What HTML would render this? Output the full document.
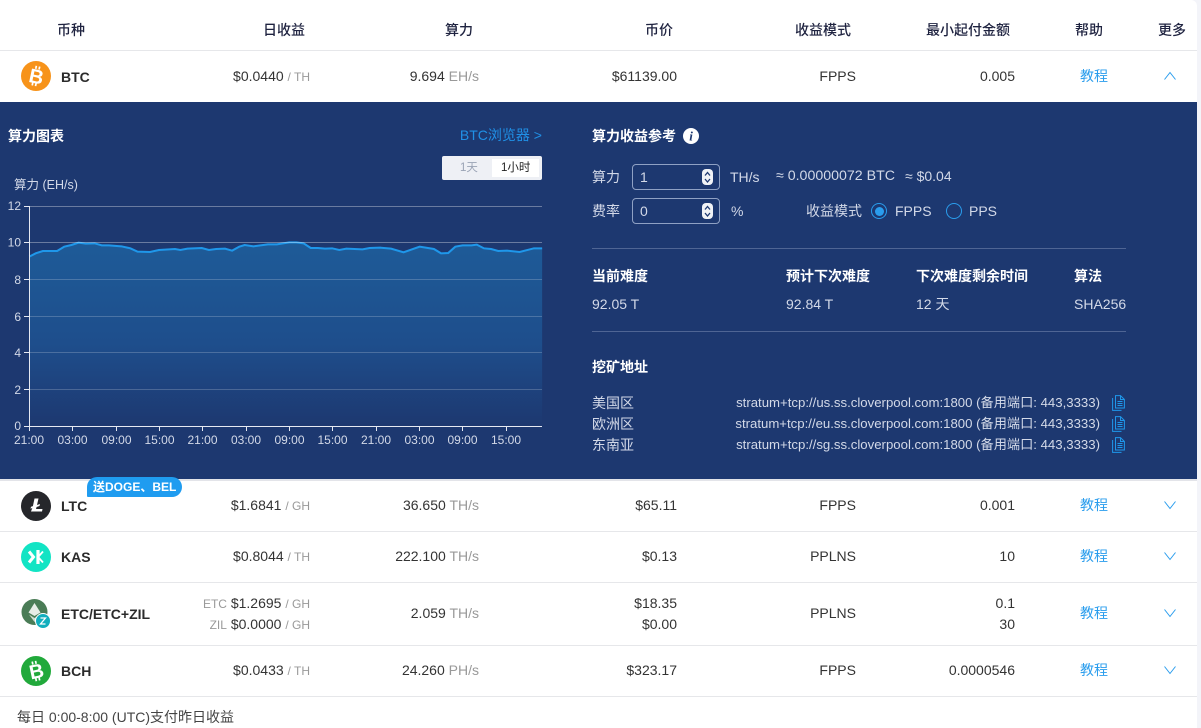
<!DOCTYPE html>
<html lang="zh">
<head>
<meta charset="utf-8">
<title>币种</title>
<style>
html,body{margin:0;padding:0;width:1201px;height:728px;overflow:hidden;background:#f3f4f9}
body{font-family:"Liberation Sans","Noto Sans CJK SC",sans-serif;font-size:14px;color:#333;position:relative}
#wrap{position:absolute;left:0;top:0;width:1197px;height:728px;background:#fff;border-top-right-radius:6px}
.t{position:absolute;white-space:nowrap;line-height:20px}
.h{color:#1f2340;font-weight:500;font-size:14px}
.b{font-weight:700;color:#2b2b2b}
.u{color:#999}
.l{color:#2a9ded}
.line{position:absolute;left:0;width:1197px;height:1px;background:#e6e7ea}
#panel{position:absolute;left:0;top:102px;width:1197px;height:377px;background:#1d3870}
.w{color:#fff;font-weight:700;font-size:14px}
.p{color:#d3d9e8}
.sep{position:absolute;left:592px;width:534px;height:1px;background:#4f6594}
.inp{position:absolute;left:632px;width:86px;height:24px;border:1px solid #8fa1c4;border-radius:4px}
.step{position:absolute;left:702px;width:11px;height:16px;background:#f0f2f6;border-radius:4px}
.radio{position:absolute;width:14px;height:14px;border:1.5px solid #2a9ded;border-radius:50%}
.addr{font-size:13.2px;right:97px}
</style>
</head>
<body>
<div id="wrap">

<span class="t h" style="left:57px;top:20px">币种</span>
<span class="t h" style="right:892px;top:20px">日收益</span>
<span class="t h" style="right:724px;top:20px">算力</span>
<span class="t h" style="right:524px;top:20px">币价</span>
<span class="t h" style="right:346px;top:20px">收益模式</span>
<span class="t h" style="right:187px;top:20px">最小起付金额</span>
<span class="t h" style="left:1075px;top:20px">帮助</span>
<span class="t h" style="left:1158px;top:20px">更多</span>
<div class="line" style="top:50px"></div>

<svg style="position:absolute;left:21px;top:61px" width="30" height="30" viewBox="0 0 30 30"><circle cx="15" cy="15" r="15" fill="#f7931a"/><g transform="rotate(12 15 15)" fill="#fff"><rect x="12.400" y="5" width="1.700" height="3"/><rect x="15.800" y="5" width="1.700" height="3"/><rect x="12.400" y="22" width="1.700" height="3"/><rect x="15.800" y="22" width="1.700" height="3"/><text x="15.500" y="22.300" text-anchor="middle" font-family="Liberation Sans" font-weight="700" font-size="20">B</text></g></svg>
<span class="t b" style="left:61px;top:67px">BTC</span>
<span class="t" style="right:887px;top:66px">$0.0440 <span class="u" style="font-size:12px">/ TH</span></span>
<span class="t" style="right:718px;top:66px">9.694 <span class="u">EH/s</span></span>
<span class="t" style="right:520px;top:66px">$61139.00</span>
<span class="t" style="right:341px;top:66px">FPPS</span>
<span class="t" style="right:182px;top:66px">0.005</span>
<span class="t l" style="left:1080px;top:66px">教程</span>
<svg style="position:absolute;left:1163px;top:70px" width="14" height="11" viewBox="0 0 14 11"><path d="M1.500 9.500L7 2.500L12.500 9.500" fill="none" stroke="#2a9ded" stroke-width="1"/></svg>

<div id="panel"></div>

<span class="t w" style="left:8px;top:126px">算力图表</span>
<span class="t l" style="right:655px;top:125px;color:#2090e6">BTC浏览器 &gt;</span>
<div style="position:absolute;left:442px;top:156px;width:100px;height:24px;background:#eef0f5;border-radius:2px"></div>
<div style="position:absolute;left:492px;top:159px;width:47px;height:18px;background:#fff"></div>
<span class="t" style="left:460px;top:158px;font-size:11.500px;color:#9aa3b5">1天</span>
<span class="t" style="left:501px;top:158px;font-size:11.500px;color:#222">1小时</span>
<span class="t p" style="left:14px;top:175px;font-size:12.500px">算力 (EH/s)</span>

<svg style="position:absolute;left:0;top:190px" width="560" height="260" viewBox="0 190 560 260">
<defs><linearGradient id="g" x1="0" y1="0" x2="0" y2="1"><stop offset="0" stop-color="#1e5b98"/><stop offset=".55" stop-color="#1e4e8c"/><stop offset="1" stop-color="#1d3870"/></linearGradient></defs>
<g transform="translate(0,120) scale(.35714,.33333)">
<polygon fill="url(#g)" points="82,410 100,400 120,393 160,393 180,380 200,375 220,368 240,371 265,370 285,376 305,376 340,379 365,385 385,395 420,396 445,390 490,387 505,390 525,386 565,384 585,390 605,387 630,386 650,392 670,380 685,375 710,379 750,373 775,373 810,367 830,367 850,370 870,384 890,384 910,386 930,385 950,390 970,386 1015,388 1035,384 1065,383 1095,386 1130,397 1175,380 1215,387 1235,400 1255,399 1275,380 1295,376 1320,376 1335,374 1355,385 1375,387 1395,393 1420,392 1455,396 1495,385 1518,385 1518,919 82,919"/>
<polyline fill="none" stroke="#1f97ea" stroke-width="6" points="82,410 100,400 120,393 160,393 180,380 200,375 220,368 240,371 265,370 285,376 305,376 340,379 365,385 385,395 420,396 445,390 490,387 505,390 525,386 565,384 585,390 605,387 630,386 650,392 670,380 685,375 710,379 750,373 775,373 810,367 830,367 850,370 870,384 890,384 910,386 930,385 950,390 970,386 1015,388 1035,384 1065,383 1095,386 1130,397 1175,380 1215,387 1235,400 1255,399 1275,380 1295,376 1320,376 1335,374 1355,385 1375,387 1395,393 1420,392 1455,396 1495,385 1518,385"/>
</g>
<g stroke="#fff" stroke-opacity=".34" stroke-width="1">
<path d="M29 206.500H542M29 242.500H542"/>
</g>
<g stroke="#fff" stroke-opacity=".2" stroke-width="1">
<path d="M29 279.500H542M29 316.500H542M29 352.500H542M29 389.500H542"/>
</g>
<g stroke="#e6e9f2" stroke-width="1" fill="none">
<path d="M29.500 206V426.500H542"/>
<path d="M24 206.500H29M24 242.500H29M24 279.500H29M24 316.500H29M24 352.500H29M24 389.500H29M24 426.500H29"/>
<path d="M29.500 427V431M72.500 427V431M116.500 427V431M159.500 427V431M202.500 427V431M246.500 427V431M289.500 427V431M332.500 427V431M376.500 427V431M419.500 427V431M462.500 427V431M506.500 427V431"/>
</g>
<g font-family="Liberation Sans" font-size="12" fill="#d3d9e8" text-anchor="end">
<text x="21" y="210">12</text><text x="21" y="246.500">10</text><text x="21" y="284">8</text><text x="21" y="321">6</text><text x="21" y="357">4</text><text x="21" y="394">2</text><text x="21" y="430">0</text>
</g>
<g font-family="Liberation Sans" font-size="12" fill="#d3d9e8" text-anchor="middle">
<text x="29" y="444">21:00</text><text x="72.500" y="444">03:00</text><text x="116.500" y="444">09:00</text><text x="159.500" y="444">15:00</text><text x="202.500" y="444">21:00</text><text x="246" y="444">03:00</text><text x="289.500" y="444">09:00</text><text x="332.500" y="444">15:00</text><text x="376" y="444">21:00</text><text x="419.500" y="444">03:00</text><text x="462.500" y="444">09:00</text><text x="506" y="444">15:00</text>
</g>
</svg>

<span class="t w" style="left:592px;top:126px">算力收益参考</span>
<svg style="position:absolute;left:683px;top:128px" width="16" height="16" viewBox="0 0 16 16"><circle cx="8" cy="8" r="8" fill="#fff"/><text x="8" y="12.500" text-anchor="middle" font-family="Liberation Serif" font-style="italic" font-weight="700" font-size="13" fill="#1d3870">i</text></svg>

<span class="t p" style="left:592px;top:167px">算力</span>
<div class="inp" style="top:164px"></div>
<span class="t p" style="left:640px;top:167px">1</span>
<div class="step" style="top:169px"></div>
<svg style="position:absolute;left:702px;top:169px" width="11" height="16" viewBox="0 0 11 16"><path d="M3 6.500L5.500 3.500L8 6.500M3 10L5.500 13L8 10" fill="none" stroke="#1d3870" stroke-width="1.300"/></svg>
<span class="t p" style="left:730px;top:167px">TH/s</span>
<span class="t p" style="left:776px;top:166px;font-size:14.200px">≈ 0.00000072 BTC</span>
<span class="t p" style="left:905px;top:166px">≈ $0.04</span>

<span class="t p" style="left:592px;top:201px">费率</span>
<div class="inp" style="top:198px"></div>
<span class="t p" style="left:640px;top:201px">0</span>
<div class="step" style="top:203px"></div>
<svg style="position:absolute;left:702px;top:203px" width="11" height="16" viewBox="0 0 11 16"><path d="M3 6.500L5.500 3.500L8 6.500M3 10L5.500 13L8 10" fill="none" stroke="#1d3870" stroke-width="1.300"/></svg>
<span class="t p" style="left:731px;top:201px">%</span>
<span class="t p" style="left:806px;top:201px">收益模式</span>
<div class="radio" style="left:871px;top:203px"></div>
<div style="position:absolute;left:875px;top:207px;width:9px;height:9px;border-radius:50%;background:#2a9ded"></div>
<span class="t p" style="left:895px;top:201px">FPPS</span>
<div class="radio" style="left:946px;top:203px"></div>
<span class="t p" style="left:969px;top:201px">PPS</span>

<div class="sep" style="top:248px"></div>
<span class="t w" style="left:592px;top:266px">当前难度</span>
<span class="t w" style="left:786px;top:266px">预计下次难度</span>
<span class="t w" style="left:916px;top:266px">下次难度剩余时间</span>
<span class="t w" style="left:1074px;top:266px">算法</span>
<span class="t p" style="left:592px;top:294px">92.05 T</span>
<span class="t p" style="left:786px;top:294px">92.84 T</span>
<span class="t p" style="left:916px;top:294px">12 天</span>
<span class="t p" style="left:1074px;top:294px">SHA256</span>
<div class="sep" style="top:331px"></div>

<span class="t w" style="left:592px;top:357px">挖矿地址</span>
<span class="t p" style="left:592px;top:393px">美国区</span>
<span class="t p addr" style="top:393px">stratum+tcp://us.ss.cloverpool.com:1800 (备用端口: 443,3333)</span>
<span class="t p" style="left:592px;top:414px">欧洲区</span>
<span class="t p addr" style="top:414px">stratum+tcp://eu.ss.cloverpool.com:1800 (备用端口: 443,3333)</span>
<span class="t p" style="left:592px;top:435px">东南亚</span>
<span class="t p addr" style="top:435px">stratum+tcp://sg.ss.cloverpool.com:1800 (备用端口: 443,3333)</span>
<svg style="position:absolute;left:1112px;top:395px" width="13" height="16" viewBox="0 0 13 16"><path d="M3.500 .6H8.500L12.400 4.500V13H3.500ZM8.500 .6V4.500H12.400M.6 3V15.400H9.500M5.500 6.500H10.500M5.500 8.500H10.500M5.500 10.500H10.500" fill="none" stroke="#1f97ea" stroke-width="1"/></svg>
<svg style="position:absolute;left:1112px;top:416px" width="13" height="16" viewBox="0 0 13 16"><path d="M3.500 .6H8.500L12.400 4.500V13H3.500ZM8.500 .6V4.500H12.400M.6 3V15.400H9.500M5.500 6.500H10.500M5.500 8.500H10.500M5.500 10.500H10.500" fill="none" stroke="#1f97ea" stroke-width="1"/></svg>
<svg style="position:absolute;left:1112px;top:437px" width="13" height="16" viewBox="0 0 13 16"><path d="M3.500 .6H8.500L12.400 4.500V13H3.500ZM8.500 .6V4.500H12.400M.6 3V15.400H9.500M5.500 6.500H10.500M5.500 8.500H10.500M5.500 10.500H10.500" fill="none" stroke="#1f97ea" stroke-width="1"/></svg>

<div class="line" style="top:479px;height:2px;background:#e3e4e9"></div>

<svg style="position:absolute;left:21px;top:491px" width="30" height="30" viewBox="0 0 30 30"><circle cx="15" cy="15" r="15" fill="#26272b"/><path d="M13.500 7.500H17.500L16 14L19 13L18.500 15L15.600 16L15 18H21.500L21 20.500H10L11.300 17L9.500 17.700L10 15.800L11.900 15.100Z" fill="#fff"/></svg>
<span class="t b" style="left:61px;top:496px">LTC</span>
<div style="position:absolute;left:87px;top:477px;width:95px;height:20px;background:#1f9cf0;border-radius:10px 10px 10px 1px"></div>
<span class="t" style="left:93px;top:477px;color:#fff;font-weight:700;font-size:12px">送DOGE、BEL</span>
<span class="t" style="right:887px;top:495px">$1.6841 <span class="u" style="font-size:12px">/ GH</span></span>
<span class="t" style="right:718px;top:495px">36.650 <span class="u">TH/s</span></span>
<span class="t" style="right:520px;top:495px">$65.11</span>
<span class="t" style="right:341px;top:495px">FPPS</span>
<span class="t" style="right:182px;top:495px">0.001</span>
<span class="t l" style="left:1080px;top:495px">教程</span>
<svg style="position:absolute;left:1163px;top:500px" width="14" height="11" viewBox="0 0 14 11"><path d="M1.500 1.500L7 8.500L12.500 1.500" fill="none" stroke="#2a9ded" stroke-width="1"/></svg>
<div class="line" style="top:531px"></div>

<svg style="position:absolute;left:21px;top:542px" width="30" height="30" viewBox="0 0 30 30"><circle cx="15" cy="15" r="15" fill="#12e4c4"/><path d="M17 8V22" stroke="#fff" stroke-width="3.200"/><path d="M8 9.500L12.500 15L8 20.500" stroke="#fff" stroke-width="3" fill="none"/><path d="M18 14L22 9.500M18 16L22 20.500" stroke="#fff" stroke-width="1.800" fill="none"/></svg>
<span class="t b" style="left:61px;top:547px">KAS</span>
<span class="t" style="right:887px;top:546px">$0.8044 <span class="u" style="font-size:12px">/ TH</span></span>
<span class="t" style="right:718px;top:546px">222.100 <span class="u">TH/s</span></span>
<span class="t" style="right:520px;top:546px">$0.13</span>
<span class="t" style="right:341px;top:546px">PPLNS</span>
<span class="t" style="right:182px;top:546px">10</span>
<span class="t l" style="left:1080px;top:546px">教程</span>
<svg style="position:absolute;left:1163px;top:551px" width="14" height="11" viewBox="0 0 14 11"><path d="M1.500 1.500L7 8.500L12.500 1.500" fill="none" stroke="#2a9ded" stroke-width="1"/></svg>
<div class="line" style="top:582px"></div>

<svg style="position:absolute;left:21px;top:599px" width="30" height="30" viewBox="0 0 30 30"><circle cx="13.500" cy="13" r="13" fill="#4a7c56"/><path d="M13.500 4L19.500 13.500L13.500 17L7.500 13.500Z" fill="#e6ece6"/><path d="M8 15.500L13.500 19L19 15.500L13.500 23Z" fill="#cfdcd0"/><circle cx="22" cy="22" r="7.500" fill="#12aebd" stroke="#fff" stroke-width="1"/><path d="M19.500 19H24.500L19.500 25H24.500" fill="none" stroke="#fff" stroke-width="1.300"/></svg>
<span class="t b" style="left:61px;top:604px">ETC/ETC+ZIL</span>
<span class="t" style="right:887px;top:593px"><span class="u" style="font-size:12px">ETC</span> $1.2695 <span class="u" style="font-size:12px">/ GH</span></span>
<span class="t" style="right:887px;top:614px"><span class="u" style="font-size:12px">ZIL</span> $0.0000 <span class="u" style="font-size:12px">/ GH</span></span>
<span class="t" style="right:718px;top:603px">2.059 <span class="u">TH/s</span></span>
<span class="t" style="right:520px;top:593px">$18.35</span>
<span class="t" style="right:520px;top:614px">$0.00</span>
<span class="t" style="right:341px;top:603px">PPLNS</span>
<span class="t" style="right:182px;top:593px">0.1</span>
<span class="t" style="right:182px;top:614px">30</span>
<span class="t l" style="left:1080px;top:603px">教程</span>
<svg style="position:absolute;left:1163px;top:608px" width="14" height="11" viewBox="0 0 14 11"><path d="M1.500 1.500L7 8.500L12.500 1.500" fill="none" stroke="#2a9ded" stroke-width="1"/></svg>
<div class="line" style="top:645px"></div>

<svg style="position:absolute;left:21px;top:656px" width="30" height="30" viewBox="0 0 30 30"><circle cx="15" cy="15" r="15" fill="#21a93b"/><g transform="rotate(-12 15 15)" fill="#fff"><rect x="12.400" y="5" width="1.700" height="3"/><rect x="15.800" y="5" width="1.700" height="3"/><rect x="12.400" y="22" width="1.700" height="3"/><rect x="15.800" y="22" width="1.700" height="3"/><text x="15.500" y="22.300" text-anchor="middle" font-family="Liberation Sans" font-weight="700" font-size="20">B</text></g></svg>
<span class="t b" style="left:61px;top:661px">BCH</span>
<span class="t" style="right:887px;top:660px">$0.0433 <span class="u" style="font-size:12px">/ TH</span></span>
<span class="t" style="right:718px;top:660px">24.260 <span class="u">PH/s</span></span>
<span class="t" style="right:520px;top:660px">$323.17</span>
<span class="t" style="right:341px;top:660px">FPPS</span>
<span class="t" style="right:182px;top:660px">0.0000546</span>
<span class="t l" style="left:1080px;top:660px">教程</span>
<svg style="position:absolute;left:1163px;top:665px" width="14" height="11" viewBox="0 0 14 11"><path d="M1.500 1.500L7 8.500L12.500 1.500" fill="none" stroke="#2a9ded" stroke-width="1"/></svg>
<div class="line" style="top:696px"></div>

<span class="t" style="left:17px;top:707px;color:#444">每日 0:00-8:00 (UTC)支付昨日收益</span>
</div>
</body>
</html>
